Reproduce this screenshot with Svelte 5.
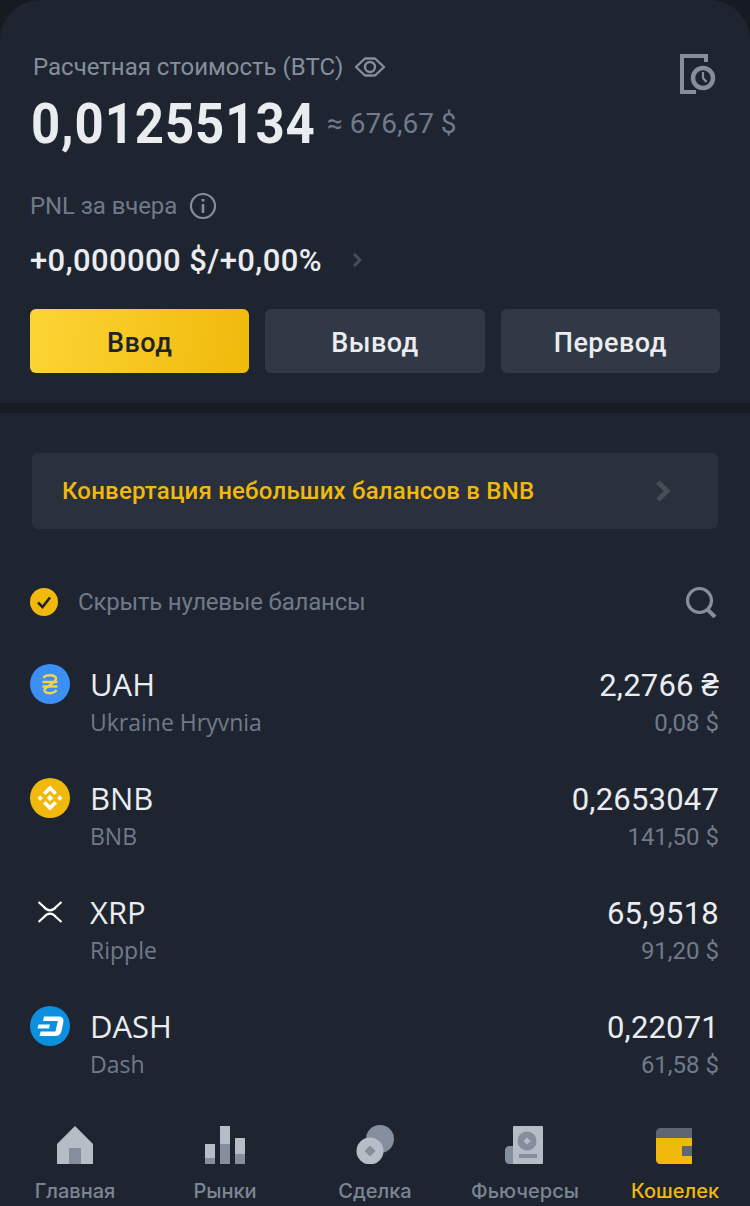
<script>
  const coins = [
    { code: 'UAH', name: 'Ukraine Hryvnia', amount: '2,2766 ₴', fiat: '0,08 $' },
    { code: 'BNB', name: 'BNB', amount: '0,2653047', fiat: '141,50 $' },
    { code: 'XRP', name: 'Ripple', amount: '65,9518', fiat: '91,20 $' },
    { code: 'DASH', name: 'Dash', amount: '0,22071', fiat: '61,58 $' }
  ];

  const tabs = [
    { id: 'home', label: 'Главная' },
    { id: 'markets', label: 'Рынки' },
    { id: 'trade', label: 'Сделка' },
    { id: 'futures', label: 'Фьючерсы' },
    { id: 'wallet', label: 'Кошелек' }
  ];
</script>

<div class="page">
  <section class="summary">
    <div class="summary-top">
      <div class="title-row">
        <span class="title">Расчетная стоимость (BTC)</span>
        <svg class="eye" viewBox="0 0 32 24" width="32" height="24" fill="none" stroke="#848e9c" stroke-width="2.4">
          <path d="M2 12 L11 3.5 H21 L30 12 L21 20.5 H11 Z" stroke-linejoin="round" />
          <circle cx="16" cy="12" r="5" />
        </svg>
      </div>
      <svg class="history" viewBox="0 0 38 40" width="38" height="40" fill="none" stroke="#848e9c">
        <path d="M26 8 V2 H2 V38 H16" stroke-width="4" />
        <circle cx="23" cy="24" r="10" stroke-width="4.5" />
        <path d="M23 18 V24 L26.5 28" stroke-width="2.2" />
      </svg>
    </div>

    <div class="balance">
      <span class="btc">0,01255134</span>
      <span class="usd">≈ 676,67 $</span>
    </div>

    <div class="pnl-label">
      <span>PNL за вчера</span>
      <svg viewBox="0 0 28 28" width="28" height="28" fill="none" stroke="#848e9c">
        <circle cx="14" cy="14" r="12" stroke-width="2.2" />
        <path d="M14 12 V21" stroke-width="2.6" />
        <path d="M14 7 V9.6" stroke-width="2.8" />
      </svg>
    </div>

    <div class="pnl-value">
      <span>+0,000000 $/+0,00%</span>
      <svg viewBox="0 0 10 16" width="10" height="16" fill="none" stroke="#474d57" stroke-width="3">
        <path d="M2 2 L8 8 L2 14" />
      </svg>
    </div>

    <div class="actions">
      <button class="primary">Ввод</button>
      <button>Вывод</button>
      <button>Перевод</button>
    </div>
  </section>

  <div class="divider"></div>

  <section class="assets">
    <div class="convert">
      <span>Конвертация небольших балансов в BNB</span>
      <svg viewBox="0 0 16 24" width="16" height="24" fill="none" stroke="#474d57" stroke-width="5">
        <path d="M3 3 L12 12 L3 21" />
      </svg>
    </div>

    <div class="filter">
      <svg viewBox="0 0 28 28" width="28" height="28">
        <circle cx="14" cy="14" r="14" fill="#f0b90b" />
        <path d="M8 14.5 L12.5 19 L20 9.5" fill="none" stroke="#1e2530" stroke-width="2.6" />
      </svg>
      <span class="filter-label">Скрыть нулевые балансы</span>
      <svg class="search" viewBox="0 0 32 32" width="32" height="32" fill="none" stroke="#848e9c">
        <circle cx="14.5" cy="14.5" r="12" stroke-width="3.2" />
        <path d="M22 23 L30 31" stroke-width="4" />
      </svg>
    </div>

    <div class="coin-list">
      {#each coins as coin}
        <div class="coin">
          <div class="coin-icon">
            {#if coin.code === 'UAH'}
              <svg viewBox="0 0 40 40" width="40" height="40">
                <circle cx="20" cy="20" r="20" fill="#3b8ff5" />
                <path d="M13.5 14 C15 10.5 24.5 10 26 14 C27 18 17 22 14.5 25.5 C13 29.5 23.5 31 26.5 26 M12.5 18 H27.5 M12.5 22.5 H27.5" fill="none" stroke="#f3d447" stroke-width="2.4" />
              </svg>
            {:else if coin.code === 'BNB'}
              <svg viewBox="0 0 40 40" width="40" height="40">
                <circle cx="20" cy="20" r="20" fill="#f0b90b" />
                <g fill="#fff">
                  <path d="M20 7.5 L27 14.5 L24.4 17 L20 12.6 L15.6 17 L13 14.5 Z" />
                  <path d="M20 32.5 L27 25.5 L24.4 23 L20 27.4 L15.6 23 L13 25.5 Z" />
                  <path d="M7.5 20 L10.2 17.3 L12.9 20 L10.2 22.7 Z" />
                  <path d="M27.1 20 L29.8 17.3 L32.5 20 L29.8 22.7 Z" />
                  <path d="M20 16.8 L23.2 20 L20 23.2 L16.8 20 Z" />
                </g>
              </svg>
            {:else if coin.code === 'XRP'}
              <svg viewBox="0 0 40 40" width="40" height="40" fill="none" stroke="#fff" stroke-width="2.2">
                <path d="M8.5 10 L14 15 C17.5 19.5 22.5 19.5 26 15 L31.5 10" />
                <path d="M8.5 30 L14 25 C17.5 20.5 22.5 20.5 26 25 L31.5 30" />
              </svg>
            {:else}
              <svg viewBox="0 0 40 40" width="40" height="40">
                <circle cx="20" cy="20" r="20" fill="#0d8fe0" />
                <path d="M14 10.5 H29 C32.5 10.5 34 13 33.3 16.5 L31.5 25 C30.8 28.5 28.5 30 25.5 30 H9.5 L10.7 25.5 H25.5 L27.8 15 H13 Z" fill="#fff" />
                <path d="M8.5 18.5 H20 L19 22.5 H7.5 Z" fill="#fff" />
              </svg>
            {/if}
          </div>
          <div class="coin-names">
            <span class="code">{coin.code}</span>
            <span class="name">{coin.name}</span>
          </div>
          <div class="coin-values">
            <span class="amount">{coin.amount}</span>
            <span class="fiat">{coin.fiat}</span>
          </div>
        </div>
      {/each}
    </div>
  </section>

  <nav class="tabbar">
    {#each tabs as tab}
      <div class="tab" class:active={tab.id === 'wallet'}>
        <svg viewBox="0 0 40 40" width="40" height="40">
          {#if tab.id === 'home'}
            <path d="M20 2 L38 20 V40 H2 V20 Z" fill="#b7bdc6" />
            <rect x="14" y="24" width="12" height="16" fill="#848e9c" />
          {:else if tab.id === 'markets'}
            <rect x="0" y="20" width="10" height="14" fill="#b7bdc6" />
            <rect x="0" y="34" width="10" height="6" fill="#848e9c" />
            <rect x="15" y="2" width="10" height="18" fill="#b7bdc6" />
            <rect x="15" y="20" width="10" height="20" fill="#848e9c" />
            <rect x="30" y="14" width="10" height="16" fill="#b7bdc6" />
            <rect x="30" y="30" width="10" height="10" fill="#848e9c" />
          {:else if tab.id === 'trade'}
            <circle cx="25" cy="15" r="14" fill="#848e9c" />
            <circle cx="15" cy="27" r="13.5" fill="#b7bdc6" />
            <path d="M15 21.5 L20.5 27 L15 32.5 L9.5 27 Z" fill="#848e9c" />
          {:else if tab.id === 'futures'}
            <path d="M4 22 H10 V40 H4 C2 40 0 38 0 36 V26 C0 24 2 22 4 22 Z" fill="#848e9c" />
            <rect x="8" y="2" width="30" height="38" rx="1" fill="#b7bdc6" />
            <circle cx="22" cy="17" r="9.5" fill="#848e9c" />
            <path d="M22 13.5 L25.5 17 L22 20.5 L18.5 17 Z" fill="#b7bdc6" />
            <rect x="14" y="30" width="18" height="4" fill="#848e9c" />
          {:else}
            <path d="M1 14 V8 C1 6 3 4 5 4 H37 V14 Z" fill="#5e6673" />
            <path d="M1 14 H37 V22 H27 V32 H37 V40 H5 C3 40 1 38 1 36 Z" fill="#f0b90b" />
            <rect x="27" y="22" width="10" height="10" fill="#5e6673" />
          {/if}
        </svg>
        <span>{tab.label}</span>
      </div>
    {/each}
  </nav>
</div>

<style>
  :global(body) {
    margin: 0;
    background: #161a21;
  }

  .page {
    width: 750px;
    height: 1206px;
    overflow: hidden;
    display: flex;
    flex-direction: column;
    position: relative;
    background: #1e2530;
    border-radius: 40px 40px 0 0;
    font-family: "Open Sans", "Noto Sans", sans-serif;
  }

  .summary {
    height: 403px;
    box-sizing: border-box;
    padding: 51px 30px 0;
  }

  .summary-top {
    display: flex;
    justify-content: space-between;
    align-items: flex-start;
    height: 32px;
    padding-right: 2px;
  }

  .title-row {
    display: flex;
    align-items: center;
    gap: 11px;
    padding-left: 3px;
    height: 32px;
  }

  .title {
    font: 400 24px "Roboto", sans-serif;
    color: #848e9c;
  }

  .history {
    margin-top: 3px;
  }

  .balance {
    display: flex;
    align-items: flex-start;
    gap: 13px;
    margin-top: 13px;
    height: 56px;
  }

  /* condensed digits: Roboto has no narrow cut here */
  .btc {
    width: 283px;
    padding-left: 1px;
    white-space: nowrap;
    font: 700 56px/56px "Roboto", sans-serif;
    color: #eaecef;
    letter-spacing: 1px;
    transform: scaleX(0.91);
    transform-origin: left center;
  }

  .usd {
    margin-top: 14px;
    font: 400 28px/28px "Roboto", sans-serif;
    color: #707a8a;
  }

  .pnl-label {
    display: flex;
    align-items: center;
    gap: 12px;
    margin-top: 38px;
    height: 32px;
    font: 400 24px "Roboto", sans-serif;
    letter-spacing: -0.1px;
    color: #707a8a;
  }

  .pnl-value {
    display: flex;
    align-items: center;
    gap: 30px;
    margin-top: 20px;
    height: 36px;
    font: 500 31px "Roboto", sans-serif;
    letter-spacing: 0.4px;
    color: #eaecef;
  }

  .actions {
    display: grid;
    grid-template-columns: repeat(3, 1fr);
    gap: 16px;
    margin-top: 31px;
  }

  button {
    height: 64px;
    padding: 3px 0 0;
    border: 0;
    border-radius: 6px;
    background: #323946;
    color: #eaecef;
    font: 500 27px "Roboto", sans-serif;
    letter-spacing: 0.5px;
  }

  .primary {
    background: linear-gradient(100deg, #fcd535, #f0b90b);
    color: #1e2329;
  }

  .divider {
    height: 10px;
    background: #181d25;
  }

  .assets {
    flex: 1;
    padding: 40px 30px 0;
  }

  .convert {
    margin: 0 2px;
    height: 76px;
    box-sizing: border-box;
    display: flex;
    align-items: center;
    justify-content: space-between;
    padding: 0 47px 0 30px;
    background: #2a303c;
    border-radius: 6px;
    font: 500 24px/26px "Roboto", sans-serif;
    color: #f0b90b;
    letter-spacing: 0.2px;
  }

  .filter {
    display: flex;
    align-items: center;
    margin-top: 57px;
    height: 32px;
    font: 400 24px "Roboto", sans-serif;
    letter-spacing: -0.2px;
    color: #707a8a;
  }

  .filter-label {
    margin-left: 20px;
    flex: 1;
  }

  .search {
    margin-right: 3px;
  }

  .coin-list {
    margin-top: 46px;
    display: flex;
    flex-direction: column;
    gap: 14px;
  }

  .coin {
    display: flex;
    height: 100px;
  }

  .coin-icon {
    width: 40px;
    height: 40px;
    margin-right: 20px;
  }

  .coin-names,
  .coin-values {
    display: flex;
    flex-direction: column;
  }

  .coin-names {
    flex: 1;
  }

  .coin-values {
    align-items: flex-end;
    margin-right: 1px;
  }

  .code,
  .amount {
    font: 400 31px/40px "Open Sans", sans-serif;
    color: #eaecef;
  }

  .code {
    margin-bottom: 2px;
  }

  .amount {
    font-family: "Roboto", sans-serif;
    line-height: 44px;
    letter-spacing: 0.2px;
  }

  .name,
  .fiat {
    font: 400 23px/32px "Open Sans", sans-serif;
    color: #707a8a;
  }

  .fiat {
    font: 400 24px/30px "Roboto", sans-serif;
  }

  .tabbar {
    position: absolute;
    left: 0;
    right: 0;
    bottom: 0;
    height: 102px;
    box-sizing: border-box;
    padding-top: 20px;
    display: grid;
    grid-template-columns: repeat(5, 150px);
    background: #1e2530;
  }

  .tab {
    display: flex;
    flex-direction: column;
    align-items: center;
    gap: 15px;
    font: 500 20px/24px "Inter", sans-serif;
    color: #7c8593;
  }

  .active {
    color: #f0b90b;
  }
</style>
